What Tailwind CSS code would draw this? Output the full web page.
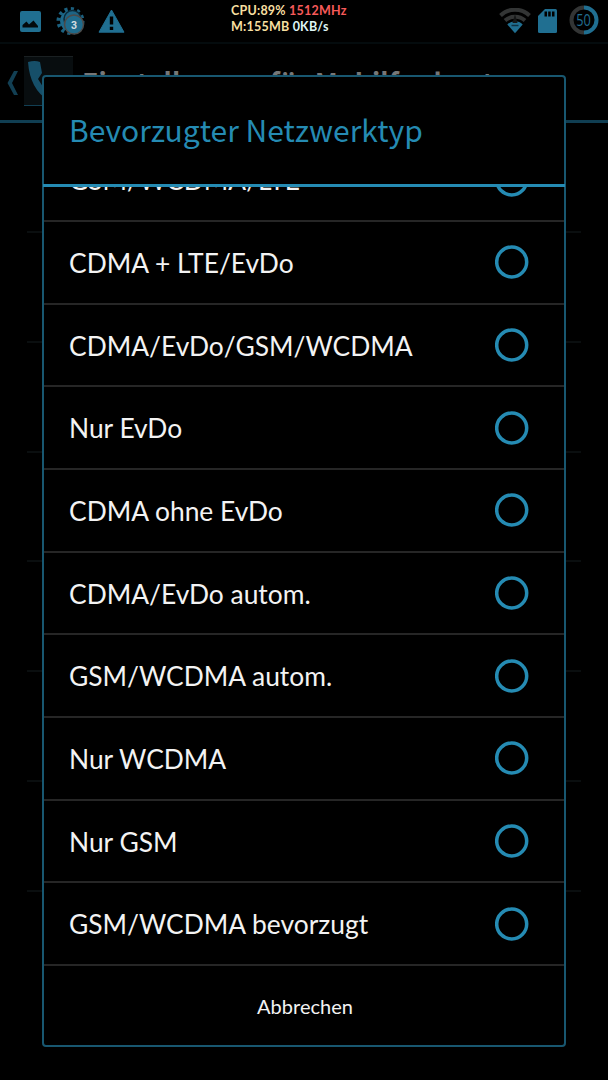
<!DOCTYPE html>
<html lang="de">
  <head>
    <meta charset="UTF-8" />
    <meta name="viewport" content="width=device-width, initial-scale=1.0" />
    <title>Bevorzugter Netzwerktyp</title>
    <script src="https://cdn.jsdelivr.net/npm/@tailwindcss/browser@4"></script>
  </head>
  <body class="relative h-[1080px] w-[608px] overflow-hidden bg-black font-[Lato,sans-serif] text-[#f3f3f3]">
    <!-- Status bar -->
    <header class="flex h-[44px] border-b-2 border-[#040b0d]">
      <div class="flex w-[231px] shrink-0 items-start pl-[20px]">
        <svg class="mt-[11px] h-[21px] w-[21px]" viewBox="0 0 21 21">
          <rect width="21" height="21" rx="2" fill="#206f91" />
          <path d="M2.500 16.500v-2.500l4-3.500 2.500 3L13.500 9.500l2 2.500 2.500 3v1.500z" fill="#03090c" />
        </svg>
        <svg class="ml-[15px] mt-[6px] h-[30px] w-[31px]" viewBox="0 0 31 30">
          <circle cx="14.500" cy="15" r="12" fill="none" stroke="#1b6180" stroke-width="4" stroke-dasharray="3 3.280" />
          <circle cx="14.500" cy="15" r="10.500" fill="#1d698b" />
          <circle cx="16.500" cy="13" r="8.500" fill="#1d6485" stroke="#0b2a39" stroke-width="1.500" />
          <circle cx="18" cy="18.500" r="9.500" fill="#1f6b8c" stroke="#4b4a49" stroke-width="1.500" />
          <text x="18" y="22.500" text-anchor="middle" font-family="Roboto, sans-serif" font-size="10.500" font-weight="700" fill="#d3dde0">3</text>
        </svg>
        <svg class="ml-[11px] mt-[9px] h-[24px] w-[27px]" viewBox="0 0 27 24">
          <path d="M13.500 1 26 23.200H1z" fill="#206f91" stroke="#206f91" stroke-linejoin="round" />
          <path d="M11.800 7.500h3.400v8h-3.400zM11.800 17.800h3.400v3.200h-3.400z" fill="#000" />
        </svg>
      </div>
      <div class="w-[240px] shrink-0 pt-[3px] text-[12.500px] leading-[15.500px] font-bold tracking-[0.220px]">
        <p class="text-[#f7dfa0]">CPU:89% <span class="text-[#f75a5a]">1512MHz</span></p>
        <p class="text-[#f7dfa0]">M:155MB <span class="text-[#dff5f6]">0KB/s</span></p>
      </div>
      <div class="flex items-start pl-[28px]">
        <svg class="mt-[8px] h-[26px] w-[32px]" viewBox="0 0 32 26">
          <g fill="none" stroke="#333535" stroke-width="4">
            <path d="M1.500 7.500a21 21 0 0 1 29 0" />
            <path d="M6 12.500a15 15 0 0 1 20 0" />
          </g>
          <path d="M8.300 16.500a11 11 0 0 1 15.400 0L16 25.200z" fill="#206f91" />
          <path d="M12.500 17.500h7" stroke="#0d3142" stroke-width="1.500" />
          <path d="M16 6 13.500 15h5z" fill="#151717" />
        </svg>
        <svg class="ml-[7px] mt-[9px] h-[24px] w-[19px]" viewBox="0 0 19 24">
          <path d="M7 0h10.500Q19 0 19 1.500v21q0 1.500-1.500 1.500h-16Q0 24 0 22.500V7z" fill="#206f91" />
          <path d="M6.500 2.500h2.500v5H6.500zM10.200 2.500h2.500v5h-2.500zM14 2.500h2.500v5H14z" fill="#000" />
        </svg>
        <svg class="ml-[12px] mt-[5px] h-[30px] w-[30px]" viewBox="0 0 30 30">
          <g fill="none" stroke-width="4">
            <path d="M15 2.500a12.500 12.500 0 0 0 0 25" stroke="#333535" />
            <path d="M15 2.500a12.500 12.500 0 0 1 0 25" stroke="#206f91" />
          </g>
          <text x="7.200" y="20.500" textLength="14.500" lengthAdjust="spacingAndGlyphs" font-family="Open Sans, sans-serif" font-size="16" fill="#206f91">50</text>
        </svg>
      </div>
    </header>

    <!-- Dimmed settings page -->
    <div class="flex h-[79px] border-b-[3px] border-[#103e52] pt-[12px]">
      <svg class="mt-[15px] ml-[7px] h-[24px] w-[12px]" viewBox="0 0 12 24">
        <path d="M7 0h4L5 12l6 12H7L.500 12z" fill="#123f53" />
      </svg>
      <div class="ml-[5px] h-[50px] w-[49px] border-t border-b border-t-[#1a2022] border-b-[#123f53] bg-[#080d0f]">
        <svg class="h-[48px] w-[49px]" viewBox="0 0 49 48">
          <path d="M4 5q7-2 12 0l2 11-4 6q3 6 8 10l8 8-6 3Q6 32 4 5z" fill="#164f69" />
        </svg>
      </div>
      <h1 class="ml-[9px] mt-[9px] font-['Noto_Sans_CJK_SC',sans-serif] text-[27px] leading-[34px] font-bold whitespace-nowrap text-[#777]">Einstellungen für Mobilfunknetze</h1>
    </div>
    <div class="mx-[27px] flex flex-col">
      <div class="h-[110px] border-b-2 border-[#0a0e0f]"></div>
      <div class="h-[109.800px] border-b-2 border-[#0a0e0f]"></div>
      <div class="h-[109.800px] border-b-2 border-[#0a0e0f]"></div>
      <div class="h-[109.800px] border-b-2 border-[#0a0e0f]"></div>
      <div class="h-[109.800px] border-b-2 border-[#0a0e0f]"></div>
      <div class="h-[109.800px] border-b-2 border-[#0a0e0f]"></div>
      <div class="h-[109.800px] border-b-2 border-[#0a0e0f]"></div>
    </div>

    <!-- Dialog -->
    <section class="absolute top-[75px] left-[42px] flex h-[972px] w-[524px] flex-col rounded-[4px] border-2 border-[#185770] bg-black">
      <h2 class="-mx-px flex h-[110px] shrink-0 items-center border-b-[3px] border-[#258bb3] pb-[2px] pl-[26px] font-['Noto_Sans_CJK_SC',sans-serif] text-[30px] text-[#258bb3]">Bevorzugter Netzwerktyp</h2>
      <ul id="types" class="flex min-h-0 flex-1 flex-col justify-end overflow-hidden text-[26.400px]"></ul>
      <button class="h-[79px] shrink-0 pl-[2px] text-[20px]">Abbrechen</button>
    </section>

    <script>
      const types = [
        'GSM/WCDMA/LTE',
        'CDMA + LTE/EvDo',
        'CDMA/EvDo/GSM/WCDMA',
        'Nur EvDo',
        'CDMA ohne EvDo',
        'CDMA/EvDo autom.',
        'GSM/WCDMA autom.',
        'Nur WCDMA',
        'Nur GSM',
        'GSM/WCDMA bevorzugt'
      ];

      document.getElementById('types').innerHTML = types.map(name => `
        <li class="flex h-[82.670px] shrink-0 items-center justify-between border-b-2 border-[#262626] pr-[35px] pl-[25px]">
          <span class="pt-[3px]">${name}</span>
          <svg class="h-[34px] w-[34px]" viewBox="0 0 34 34">
            <circle cx="16.700" cy="17" r="15" fill="none" stroke="#258bb3" stroke-width="3.500" />
          </svg>
        </li>`).join('');
    </script>
  </body>
</html>
